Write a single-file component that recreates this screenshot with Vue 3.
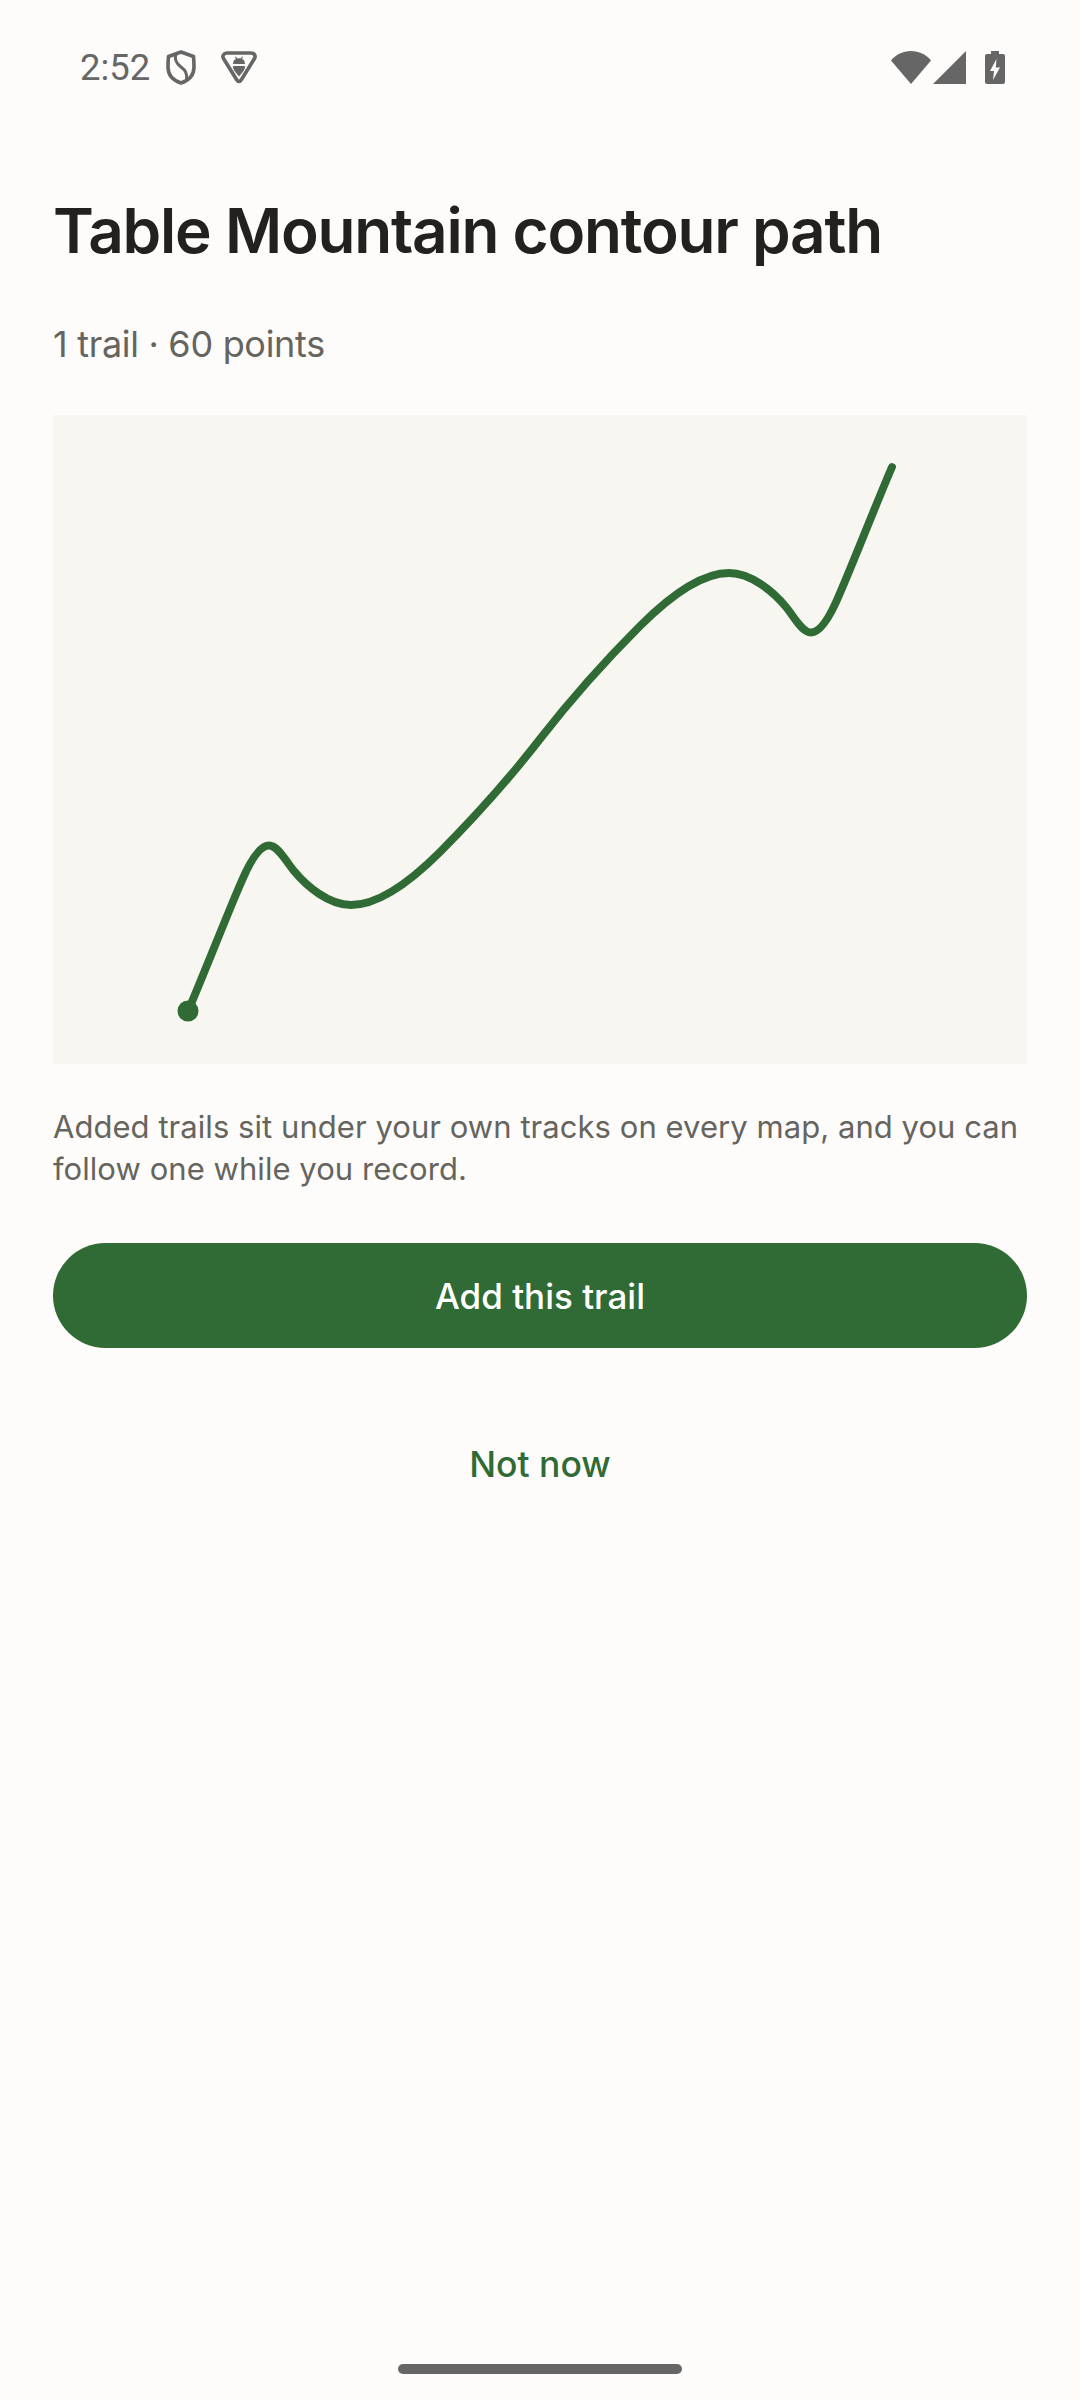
<script setup>
// the second half is the first one turned around the middle (540, 739)
const trailPath = `M188 1011
  C199 986 229 910 240 885
  C247 868 258 845.5 269 845.5
  C278 845.5 285 860 294 871
  C307 886.6 329 905 351 905
  C381 905 415 877 440 852
  C470 822 510 777.6 540 739
  C570 700.4 610 656 640 626
  C665 601 699 573 729 573
  C751 573 773 591.4 786 607
  C795 618 802 632.5 811 632.5
  C822 632.5 833 610 840 593
  C851 568 881 492 892 467`
</script>

<template>
  <div class="screen">
    <div class="status-bar">
      <div class="status-left">
        <span class="time">2:52</span>
        <svg class="shield" width="30" height="35" viewBox="0 0 30 35" fill="none" stroke="#666" stroke-width="3.6" stroke-linejoin="round">
          <path d="M15 2 L27.500 6.500 C28 12 28 14 28 17 C28 25 22.500 30.500 15 33 C7.500 30.500 2 25 2 17 C2 14 2 12 2.500 6.500 Z" />
          <path d="M10 4 C8 10 11 14 15 17 C19 20 21.500 23 20.500 30" stroke-width="3" />
        </svg>
        <svg class="tri" width="36" height="33" viewBox="0 0 36 33">
          <path d="M6 2 H30 C33.500 2 35 5 33.500 7.500 L20.500 28.500 C19 31 17 31 15.500 28.500 L2.500 7.500 C1 5 2.500 2 6 2 Z" fill="none" stroke="#666" stroke-width="3.600" stroke-linejoin="round" />
          <path d="M12 13 C12 10 13.500 8.500 15 8 L14 6 L15 5.500 L16.200 7.500 C17.400 7.200 18.600 7.200 19.800 7.500 L21 5.500 L22 6 L21 8 C22.500 8.500 24 10 24 13 Z" fill="#666" />
          <path d="M12 15 H24 C24 17 23.500 18.500 22.500 20 L18 25.500 L13.500 20 C12.500 18.500 12 17 12 15 Z" fill="#666" />
        </svg>
      </div>
      <div class="status-right">
        <svg width="40" height="33" viewBox="0 0 40 33"><path d="M0 9.500 C5 3.500 12 0 20 0 C28 0 35 3.500 40 9.500 L20 33 Z" fill="#666" /></svg>
        <svg class="signal" width="33" height="33" viewBox="0 0 33 33"><path d="M33 0 V33 H0 Z" fill="#666" /></svg>
        <svg class="battery" width="20" height="33" viewBox="0 0 20 33">
          <path d="M6 0 H14 V3 H18 C19.200 3 20 3.800 20 5 V31 C20 32.200 19.200 33 18 33 H2 C.8 33 0 32.200 0 31 V5 C0 3.800 .8 3 2 3 H6 Z" fill="#666" />
          <path d="M11.500 8 L5 20 H9 L8 29 L15 16.500 H10.800 Z" fill="#fdfcfa" />
        </svg>
      </div>
    </div>

    <main class="content">
      <h1 class="title">Table Mountain contour path</h1>
      <p class="meta">1 trail · 60 points</p>

      <div class="preview">
        <svg class="trail" viewBox="53 415 974 649" width="974" height="649">
          <path
            :d="trailPath"
            fill="none"
            stroke="#306b36"
            stroke-width="7.900"
            stroke-linecap="round"
            stroke-linejoin="round"
          />
          <circle cx="188" cy="1011" r="10.500" fill="#306b36" />
        </svg>
      </div>

      <p class="note">Added trails sit under your own tracks on every map, and you can follow one while you record.</p>

      <button class="primary" type="button">Add this trail</button>
      <button class="secondary" type="button">Not now</button>
    </main>

    <div class="home-pill"></div>
  </div>
</template>

<style scoped>
.screen {
  position: relative;
  width: 1080px;
  height: 2400px;
  background: #fdfcfa;
  overflow: hidden;
  font-family: Inter, "Noto Sans", sans-serif;
}

.status-bar {
  display: flex;
  justify-content: space-between;
  align-items: center;
  height: 108px;
  padding: 26px 75px 0 80px;
  box-sizing: border-box;
}

.status-left,
.status-right {
  display: flex;
  align-items: center;
}

.time {
  font-family: Roboto, sans-serif;
  font-size: 36.500px;
  color: #666;
  margin-right: 16px;
}

.tri {
  margin-left: 25px;
}

.signal {
  margin-left: 2px;
}

.battery {
  margin-left: 19px;
}

.content {
  display: flex;
  flex-direction: column;
  padding: 0 53px;
}

.title {
  margin: 87px 0 0;
  font-size: 62px;
  line-height: 72px;
  font-weight: 600;
  letter-spacing: -1.200px;
  color: #22211f;
}

.meta {
  margin: 55px 0 0;
  font-size: 36px;
  line-height: 44px;
  color: #66645f;
  letter-spacing: -0.300px;
}

.preview {
  margin-top: 49px;
  height: 649px;
  background: #f8f6f1;
}

.trail {
  display: block;
}

.note {
  margin: 42px 0 0;
  font-size: 31px;
  line-height: 42px;
  letter-spacing: 0.050px;
  color: #66645f;
}

.primary {
  margin-top: 53px;
  height: 105px;
  border: none;
  border-radius: 53px;
  background: #306b36;
  color: #fff;
  font: 500 35px Inter, sans-serif;
}

.secondary {
  margin-top: 95px;
  height: 42px;
  padding: 0;
  border: none;
  background: none;
  color: #306b36;
  font: 500 35.500px Inter, sans-serif;
}

.home-pill {
  position: absolute;
  left: 398px;
  bottom: 26px;
  width: 284px;
  height: 10px;
  border-radius: 5px;
  background: #666;
}
</style>
